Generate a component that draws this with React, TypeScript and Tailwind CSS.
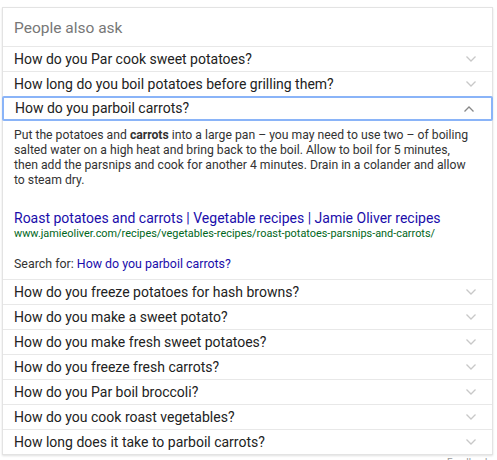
import * as React from 'react';

const topQuestions = [
    "How do you Par cook sweet potatoes?",
    "How long do you boil potatoes before grilling them?",
];

const moreQuestions = [
    "How do you freeze potatoes for hash browns?",
    "How do you make a sweet potato?",
    "How do you make fresh sweet potatoes?",
    "How do you freeze fresh carrots?",
    "How do you Par boil broccoli?",
    "How do you cook roast vegetables?",
    "How long does it take to parboil carrots?",
];

function Chevron({ up }: { up?: boolean }) {
    return (
        <svg width="12" height="8" viewBox="0 0 12 8" className="shrink-0">
            <path
                d={up ? "M1.5 6.5 L6 2 L10.5 6.5" : "M1.5 1.5 L6 6 L10.5 1.5"}
                fill="none"
                stroke={up ? "#888" : "#c8c8c8"}
                strokeWidth="1.3"
            />
        </svg>
    );
}

function QuestionRow({ text }: { text: string }) {
    return (
        <div className="h-[25px] flex items-center justify-between pl-[11px] pr-[15px] border-t border-[#e8e8e8]">
            <span className="text-[14px] text-[#222]">{text}</span>
            <Chevron />
        </div>
    );
}

export default function App() {
    return (
        <div className="w-[497px] h-[460px] bg-white overflow-hidden" style={{ fontFamily: 'Roboto, Arial, sans-serif' }}>
            <div className="ml-[2px] mt-[7px] w-[491px] border border-[#e3e3e3] shadow-[0_1px_2px_rgba(0,0,0,0.12)]">
                <div className="h-[38px] flex items-center pl-[11px] pt-[4px]">
                    <span className="text-[15.5px] text-[#777]">People also ask</span>
                </div>
                {topQuestions.map((q) => <QuestionRow key={q} text={q} />)}

                <div className="h-[25px] -mx-px flex items-center justify-between pl-[12px] pr-[16px] border-2 border-[#8ab4f8] rounded-[2px]">
                    <span className="text-[14px] text-[#222] -ml-px">How do you parboil carrots?</span>
                    <Chevron up />
                </div>

                <div className="pl-[11px] pr-[8px] pt-[7px] pb-[7px]">
                    <p className="text-[12.2px] leading-[15px] text-[#333] whitespace-nowrap">
                        Put the potatoes and <b>carrots</b> into a large pan – you may need to use two – of boiling<br />
                        salted water on a high heat and bring back to the boil. Allow to boil for 5 minutes,<br />
                        then add the parsnips and cook for another 4 minutes. Drain in a colander and allow<br />
                        to steam dry.
                    </p>
                    <div className="mt-[22px]">
                        <a href="#" className="block text-[14px] leading-[17px] text-[#1a0dab]">
                            Roast potatoes and carrots | Vegetable recipes | Jamie Oliver recipes
                        </a>
                        <div className="text-[10.9px] leading-[14px] text-[#006621]">
                            www.jamieoliver.com/recipes/vegetables-recipes/roast-potatoes-parsnips-and-carrots/
                        </div>
                    </div>
                    <div className="mt-[15px] text-[12.4px] leading-[16px] text-[#333]">
                        Search for: <a href="#" className="text-[#1a0dab]">How do you parboil carrots?</a>
                    </div>
                </div>

                {moreQuestions.map((q) => <QuestionRow key={q} text={q} />)}
            </div>
            <div className="w-[490px] text-right text-[10px] text-[#999] leading-[12px] mt-[2px]">Feedback</div>
        </div>
    );
}
